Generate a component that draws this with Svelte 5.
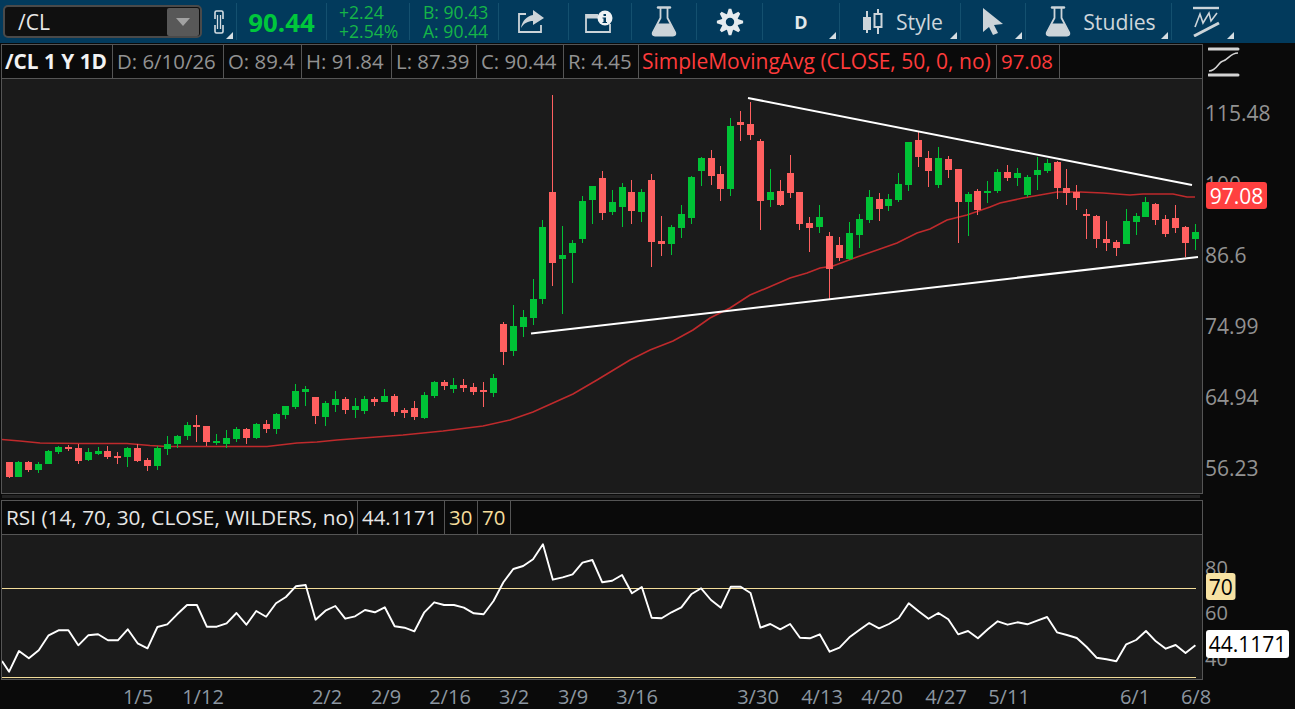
<script>
	// [high, body top, body bottom, low, up] in page pixels
	const candles = [
		[462, 462, 477, 478, 0], [461, 462, 477, 477, 1], [461, 462, 470, 472, 0], [462, 464, 470, 473, 1],
		[450, 451, 464, 464, 1], [446, 447, 452, 454, 1], [445, 447, 449, 451, 0], [444, 448, 461, 464, 0],
		[448, 452, 460, 461, 1], [447, 451, 454, 455, 1], [446, 451, 457, 459, 0], [452, 456, 458, 464, 0],
		[447, 448, 457, 467, 1], [444, 448, 461, 462, 0], [458, 460, 466, 471, 0], [446, 448, 466, 470, 1],
		[436, 444, 449, 455, 1], [435, 436, 444, 448, 1], [422, 425, 436, 440, 1], [415, 425, 427, 442, 0],
		[426, 426, 442, 446, 0], [434, 441, 443, 445, 1], [430, 438, 444, 448, 1], [427, 429, 439, 442, 1],
		[428, 429, 438, 444, 0], [423, 424, 438, 439, 1], [420, 424, 429, 433, 0], [413, 414, 429, 434, 1],
		[406, 406, 415, 419, 1], [384, 391, 407, 409, 1], [386, 389, 392, 406, 1], [397, 397, 416, 424, 0],
		[401, 403, 417, 426, 1], [391, 399, 405, 412, 1], [397, 399, 410, 414, 0], [398, 406, 410, 418, 1],
		[396, 399, 411, 414, 1], [397, 399, 402, 406, 0], [389, 396, 402, 402, 1], [394, 396, 412, 416, 0],
		[408, 410, 413, 418, 0], [401, 408, 417, 420, 0], [392, 395, 418, 419, 1], [381, 382, 396, 398, 1],
		[380, 382, 386, 390, 0], [378, 385, 389, 393, 1], [379, 385, 388, 392, 0], [383, 387, 392, 395, 0],
		[382, 390, 392, 407, 0], [374, 378, 393, 397, 1], [322, 324, 352, 365, 0], [305, 326, 351, 356, 1],
		[310, 317, 327, 337, 1], [279, 299, 318, 325, 1], [220, 227, 299, 304, 1], [95, 192, 263, 286, 0],
		[226, 255, 259, 314, 1], [240, 243, 253, 283, 1], [196, 201, 239, 243, 1], [186, 186, 200, 224, 1],
		[171, 178, 213, 220, 0], [190, 202, 212, 215, 1], [183, 187, 207, 227, 1], [180, 192, 211, 224, 0],
		[189, 192, 212, 222, 1], [174, 180, 242, 267, 0], [216, 241, 244, 256, 0], [225, 227, 244, 255, 1],
		[205, 214, 228, 238, 1], [176, 177, 218, 224, 1], [157, 158, 171, 186, 1], [150, 158, 176, 185, 0],
		[166, 174, 189, 201, 0], [118, 126, 189, 196, 1], [111, 122, 125, 141, 0], [102, 124, 135, 140, 0],
		[139, 141, 201, 230, 0], [169, 192, 200, 207, 1], [180, 191, 205, 206, 0], [155, 173, 193, 198, 0],
		[192, 192, 224, 230, 0], [217, 223, 228, 252, 0], [205, 217, 227, 233, 1], [232, 236, 269, 299, 0],
		[237, 245, 258, 261, 0], [222, 233, 259, 260, 1], [214, 219, 235, 248, 1], [190, 197, 220, 223, 1],
		[193, 199, 209, 221, 0], [194, 199, 206, 211, 1], [173, 184, 200, 202, 1], [142, 142, 185, 191, 1],
		[132, 140, 157, 167, 0], [151, 158, 171, 187, 0], [147, 158, 185, 188, 1], [156, 159, 170, 178, 0],
		[169, 169, 202, 243, 0], [192, 194, 202, 236, 1], [189, 191, 210, 215, 0], [181, 191, 193, 203, 1],
		[169, 172, 191, 193, 1], [165, 172, 178, 181, 0], [168, 173, 178, 186, 1], [175, 177, 195, 197, 1],
		[157, 170, 175, 190, 1], [159, 163, 171, 173, 1], [161, 162, 188, 199, 0], [169, 188, 193, 205, 0],
		[185, 192, 198, 210, 0], [209, 214, 216, 239, 0], [215, 216, 239, 248, 0], [221, 239, 243, 251, 0],
		[240, 242, 248, 256, 0], [209, 221, 244, 244, 1], [213, 216, 222, 235, 1], [197, 202, 217, 217, 1],
		[203, 204, 220, 225, 0], [215, 219, 234, 237, 0], [205, 218, 228, 233, 0], [226, 227, 243, 257, 0],
		[224, 232, 239, 250, 1]
	];

	const barX = (i) => Math.floor(9.1 + i * 9.886);

	const sma =
		'2,439.5 20,441 40,443 80,443.5 127,443.5 150,445.5 167,446.5 267,446.5 297,443 317,442 337,440 363,438 403,435 443,431 483,426 510,420 533,412 553,403 573,394 597,380 630,360 650,350 673,341 693,330 710,318 730,308 750,295 767,288 790,278 807,273 820,268 833,266 857,257 880,249 897,243 917,233 930,229 947,220 967,215 990,207 1000,203 1023,198 1040,195 1057,192 1080,192 1103,193 1130,195 1143,194 1173,194 1187,197 1195,197';

	// rsi values in zoomed rows, one per bar: page y = 495 + v / 3
	const rsiRaw = [
		530, 468, 490, 466, 421, 406, 406, 451, 421, 418, 436, 436, 403, 445, 460, 396, 388, 358, 330, 330, 395, 395,
		385, 354, 389, 348, 365, 325, 306, 274, 270, 374, 347, 333, 371, 364, 345, 352, 337, 394, 398, 409, 352, 322,
		330, 330, 338, 355, 358, 318, 262, 222, 213, 193, 148, 254, 247, 238, 203, 195, 262, 257, 240, 295, 276, 368,
		370, 352, 337, 298, 280, 315, 338, 275, 275, 294, 398, 387, 403, 387, 428, 430, 418, 470, 458, 427, 405, 384,
		400, 387, 369, 325, 349, 371, 354, 373, 418, 408, 430, 403, 379, 389, 382, 388, 377, 366, 412, 420, 429, 456,
		488, 493, 499, 448, 435, 408, 439, 461, 450, 474, 451
	];
	const rsi =
		'2,661 ' + rsiRaw.map((v, i) => `${9.1 + i * 9.886},${(495 + v / 3).toFixed(1)}`).join(' ');

	const legend = [
		{ t: '/CL 1 Y 1D', w: 111, k: 'sym' },
		{ t: 'D: 6/10/26', w: 111 },
		{ t: 'O: 89.4', w: 78 },
		{ t: 'H: 91.84', w: 90 },
		{ t: 'L: 87.39', w: 85 },
		{ t: 'C: 90.44', w: 87 },
		{ t: 'R: 4.45', w: 75 },
		{ t: 'SimpleMovingAvg (CLOSE, 50, 0, no)', w: 358, k: 'red sma' },
		{ t: '97.08', w: 63, k: 'red' }
	];

	const rsiLegend = [
		{ t: 'RSI (14, 70, 30, CLOSE, WILDERS, no)', w: 356, k: 'white wide' },
		{ t: '44.1171', w: 87, k: 'white' },
		{ t: '30', w: 33, k: 'yellow' },
		{ t: '70', w: 33, k: 'yellow' }
	];

	const dates = [
		['1/5', 138], ['1/12', 203], ['2/2', 327], ['2/9', 386], ['2/16', 450], ['3/2', 514], ['3/9', 573],
		['3/16', 637], ['3/30', 758], ['4/13', 822], ['4/20', 882], ['4/27', 946], ['5/11', 1009], ['6/1', 1135], ['6/8', 1196]
	];

	const prices = [
		['115.48', 121], ['100', 192], ['86.6', 263], ['74.99', 334], ['64.94', 405], ['56.23', 476]
	];

	// eight pointed gear outline, centred on 14,14
	function gearPath() {
		const pts = [];
		for (let n = 0; n < 8; n++) {
			const a = (n * Math.PI) / 4;
			for (const [d, r] of [[-0.36, 8.5], [-0.1, 13.2], [0.1, 13.2], [0.36, 8.5]]) {
				pts.push(`${(14 + r * Math.sin(a + d)).toFixed(2)} ${(14 - r * Math.cos(a + d)).toFixed(2)}`);
			}
		}
		return 'M' + pts.join('L') + 'ZM18.2 14A4.2 4.2 0 1 0 9.8 14A4.2 4.2 0 1 0 18.2 14Z';
	}
</script>

<div class="app">
	<header class="toolbar">
		<div class="symbol-box">
			<span class="symbol">/CL</span>
			<span class="drop"><i></i></span>
		</div>
		<div class="cell w-link">
			<svg width="12" height="24" viewBox="0 0 12 24" fill="none" stroke="#d5dde2" stroke-width="1.6">
				<path d="M2 9V2.5Q2 1 3.5 1H8.5Q10 1 10 2.5V9" />
				<path d="M2 15V21.5Q2 23 3.5 23H8.5Q10 23 10 21.5V15" />
				<path d="M4.5 5V19M7.5 5V19" stroke-width="1.3" />
			</svg>
			<span class="corner"></span>
		</div>
		<div class="cell w-price"><span class="last">90.44</span></div>
		<div class="cell w-change"><div class="quote"><span>+2.24</span><span>+2.54%</span></div></div>
		<div class="cell w-bid"><div class="quote"><span>B: 90.43</span><span>A: 90.44</span></div></div>
		<div class="cell w-share">
			<svg width="28" height="24" viewBox="0 0 28 24">
				<path d="M9 4H2V22H24V15" fill="none" stroke="#ccd4d9" stroke-width="1.8" />
				<path d="M16 0L27 8L16 15V11C11 11 7 13 4 18C5 11 10 6 16 5Z" fill="#ccd4d9" />
			</svg>
		</div>
		<div class="cell w-note">
			<svg width="29" height="24" viewBox="0 0 29 24">
				<path d="M14 5H2V22H26V14" fill="none" stroke="#ccd4d9" stroke-width="1.8" />
				<path d="M2 7H14" stroke="#ccd4d9" stroke-width="3" />
				<circle cx="21" cy="8" r="7.5" fill="#eef2f4" />
				<path d="M19.5 4H22V6H19.5ZM19.5 7.5H22V12H23V13H18.5V12H19.5V8.5H18.5V7.5Z" fill="#023a5c" />
			</svg>
		</div>
		<div class="cell w-flask">
			<svg width="26" height="31" viewBox="0 0 26 31">
				<path d="M7 1.5H19" stroke="#ccd4d9" stroke-width="2.4" stroke-linecap="round" />
				<path d="M9.5 2V12L1.8 26.5Q1 29.5 4 29.5H22Q25 29.5 24.2 26.5L16.5 12V2" fill="none" stroke="#ccd4d9" stroke-width="1.8" />
				<path d="M7 17.5H19L24 27Q24.5 30 22 30H4Q1.5 30 2 27Z" fill="#ccd4d9" />
			</svg>
		</div>
		<div class="cell w-gear">
			<svg width="28" height="28" viewBox="0 0 28 28">
				<path d={gearPath()} fill="#e6ebee" fill-rule="evenodd" />
			</svg>
		</div>
		<div class="cell w-d"><b class="d">D</b><span class="corner"></span></div>
		<div class="cell w-style">
			<svg width="22" height="26" viewBox="0 0 22 26" fill="none" stroke="#ccd4d9">
				<path d="M5 2V24" stroke-width="2" />
				<rect x="1" y="8" width="8" height="13" fill="#ccd4d9" stroke="none" />
				<path d="M16 0V25" stroke-width="2" />
				<rect x="12.5" y="5" width="7" height="13" fill="#023a5c" stroke-width="2" />
			</svg>
			<span class="label">Style</span>
			<span class="corner"></span>
		</div>
		<div class="cell w-cursor">
			<svg width="20" height="27" viewBox="0 0 20 27">
				<path d="M0 0V24L6 19L10 27L15 25L11 17L20 16Z" fill="#ccd4d9" />
			</svg>
			<span class="corner"></span>
		</div>
		<div class="cell w-studies">
			<svg width="26" height="31" viewBox="0 0 26 31">
				<path d="M7 1.5H19" stroke="#ccd4d9" stroke-width="2.4" stroke-linecap="round" />
				<path d="M9.5 2V12L1.8 26.5Q1 29.5 4 29.5H22Q25 29.5 24.2 26.5L16.5 12V2" fill="none" stroke="#ccd4d9" stroke-width="1.8" />
				<path d="M7 17.5H19L24 27Q24.5 30 22 30H4Q1.5 30 2 27Z" fill="#ccd4d9" />
			</svg>
			<span class="label">Studies</span>
			<span class="corner"></span>
		</div>
		<div class="cell w-draw">
			<svg width="27" height="31" viewBox="0 0 27 31" fill="none" stroke="#ccd4d9">
				<path d="M0 2H26" stroke-width="2.4" />
				<path d="M2 21L7 8L10 17L16 7L18 15L24 7" stroke-width="1.6" />
				<path d="M1 30L26 17" stroke-width="3" />
			</svg>
			<span class="corner"></span>
		</div>
	</header>

	<section class="panel-row price-row">
		<div class="panel">
			<div class="legend">
				{#each legend as c}
					<span class="lg {c.k ?? ''}" style="width:{c.w}px">{c.t}</span>
				{/each}
			</div>
			<svg class="plot" width="1200" height="414" viewBox="2 79 1200 414">
				<polyline points={sma} fill="none" stroke="#bf2a2c" stroke-width="1.6" />
				{#each candles as [hi, top, bot, lo, up], i}
					<g class={up ? 'up' : 'down'} shape-rendering="crispEdges">
						<rect x={barX(i)} y={hi} width="1" height={lo - hi} />
						<rect x={barX(i) - 3} y={top} width="7" height={bot - top} />
					</g>
				{/each}
				<line x1="748" y1="98" x2="1192" y2="185" stroke="#fff" stroke-width="2" />
				<line x1="531" y1="333.5" x2="1198" y2="257" stroke="#fff" stroke-width="2" />
			</svg>
		</div>
		<div class="axis">
			<div class="axis-head">
				<svg width="32" height="30" viewBox="0 0 32 30" fill="none" stroke="#d4d4d4">
					<path d="M1 2H30M1 28H30" stroke-width="3" stroke-linecap="round" />
					<path d="M1 24C9 24 10 15 15 14S22 6 30 6" stroke-width="1.5" />
				</svg>
			</div>
			<svg width="93" height="414" viewBox="1203 79 93 414">
				{#each prices as [p, y]}
					<text x="1205" {y} class="scale big">{p}</text>
				{/each}
				<rect x="1206" y="182" width="61" height="27" rx="3" fill="#ff4040" />
				<text x="1236.5" y="204" class="tag" fill="#fff">97.08</text>
			</svg>
		</div>
	</section>

	<div class="handle"></div>

	<section class="panel-row rsi-row">
		<div class="panel">
			<div class="legend">
				{#each rsiLegend as c}
					<span class="lg {c.k}" style="width:{c.w}px">{c.t}</span>
				{/each}
			</div>
			<svg class="plot" width="1200" height="144" viewBox="2 535 1200 144">
				<line x1="2" y1="588.5" x2="1196" y2="588.5" class="level" />
				<line x1="2" y1="677.5" x2="1196" y2="677.5" class="level" />
				<polyline points={rsi} fill="none" stroke="#fff" stroke-width="1.9" stroke-linejoin="round" />
			</svg>
		</div>
		<div class="axis rsi-axis">
			<svg width="93" height="180" viewBox="1203 500 93 180">
				<text x="1205" y="575" class="scale">80</text>
				<text x="1205" y="620" class="scale">60</text>
				<text x="1205" y="666" class="scale">40</text>
				<rect x="1206" y="573" width="29.5" height="27" rx="3" fill="#f7e2a3" />
				<text x="1220.7" y="595" class="tag" fill="#000">70</text>
				<rect x="1206" y="630" width="83" height="28" rx="3" fill="#fff" />
				<text x="1247.5" y="652" class="tag" fill="#000">44.1171</text>
			</svg>
		</div>
	</section>

	<svg class="dates" width="1295" height="29" viewBox="0 680 1295 29">
		{#each dates as [d, x]}
			<text {x} y="703.5" text-anchor="middle">{d}</text>
		{/each}
	</svg>
</div>

<style>
	:global(body) {
		margin: 0;
		background: #0a0a0a;
	}

	.app {
		width: 1295px;
		height: 709px;
		overflow: hidden;
		background: #0a0a0a;
		font-family: 'Open Sans', sans-serif;
		color: #929292;
	}

	.toolbar {
		display: flex;
		height: 44px;
		box-sizing: border-box;
		padding-bottom: 1px;
		background: #023a5c;
		border-bottom: 1px solid #0a0a0a;
		align-items: stretch;
	}

	.symbol-box {
		position: relative;
		width: 199px;
		margin: 5px 0 4px 3px;
		box-sizing: border-box;
		flex: none;
		display: flex;
		align-items: center;
		justify-content: space-between;
		background: #101010;
		border: 2px solid #4a4a4a;
		border-radius: 5px;
	}

	.symbol {
		margin-left: 13px;
		font-size: 21px;
		color: #e8e8e8;
	}

	.drop {
		width: 32px;
		height: 28px;
		margin-right: 1px;
		display: flex;
		align-items: center;
		justify-content: center;
		background: #585858;
		border-radius: 2px;
	}

	.drop i {
		width: 0;
		height: 0;
		border-left: 7px solid transparent;
		border-right: 7px solid transparent;
		border-top: 8px solid #a2a2a2;
	}

	.cell {
		position: relative;
		flex: none;
		box-sizing: border-box;
		margin: 3px 0 2px;
		display: flex;
		align-items: center;
		justify-content: center;
		gap: 12px;
		border-right: 1px solid #14506f;
	}

	.w-link { width: 35px; padding-right: 1px; }
	.w-price { width: 90px; }
	.w-change { width: 83px; justify-content: flex-start; padding-left: 12px; }
	.w-bid { width: 89px; justify-content: flex-start; padding-left: 13px; }
	.w-share { width: 70px; padding-right: 6px; }
	.w-note { width: 63px; padding-right: 3px; }
	.w-flask { width: 65px; }
	.w-gear { width: 66px; }
	.w-d { width: 77px; }
	.w-style { width: 121px; padding-left: 5px; }
	.w-cursor { width: 65px; }
	.w-studies { width: 146px; padding-left: 4px; }
	.w-draw { width: 65px; border-right: none; padding-left: 3px; }

	.corner {
		position: absolute;
		right: 3px;
		bottom: 1px;
		width: 0;
		height: 0;
		border-left: 7px solid transparent;
		border-bottom: 7px solid #d5dde2;
	}

	.last {
		font-size: 25.8px;
		font-weight: 700;
		color: #00c73c;
	}

	.quote {
		display: flex;
		flex-direction: column;
		font-size: 17.6px;
		line-height: 19px;
		color: #16b548;
		white-space: nowrap;
	}

	.d {
		font-size: 18px;
		color: #e2e8eb;
	}

	.label {
		font-size: 21.2px;
		color: #ced6db;
	}

	.panel-row {
		display: grid;
		grid-template-columns: 1203px 92px;
	}

	.panel {
		margin-left: 1px;
		width: 1202px;
		box-sizing: border-box;
		border: 1px solid #555;
		background: #1b1b1b;
		display: flex;
		flex-direction: column;
	}

	.price-row .panel { height: 450px; }
	.rsi-row .panel { height: 180px; }

	.legend {
		display: flex;
		height: 34px;
		flex: none;
		box-sizing: border-box;
		border-bottom: 1px solid #555;
		background: #0a0a0a;
	}

	.lg {
		box-sizing: border-box;
		flex: none;
		padding-left: 4px;
		border-right: 1px solid #555;
		font-size: 20.4px;
		line-height: 33px;
		white-space: nowrap;
	}

	.sym { font-weight: 700; font-size: 20.8px; color: #f2f2f2; padding-left: 3px; }
	.red { color: #ff3b3b; }
	.sma { font-size: 21px; padding-left: 3px; }
	.white { color: #e6e6e6; }
	.wide { font-size: 20.8px; }
	.yellow { color: #f5dd9b; }

	.plot { display: block; }

	.up { fill: #00c236; }
	.down { fill: #ff6060; }

	.level {
		stroke: #f3dd9a;
		stroke-width: 1;
	}

	.axis {
		display: flex;
		flex-direction: column;
	}

	.axis-head {
		height: 35px;
		padding-left: 5px;
		display: flex;
		align-items: center;
	}

	.scale {
		font-size: 20px;
		fill: #929292;
	}

	.scale.big { font-size: 21px; }

	.tag {
		font-size: 21px;
		text-anchor: middle;
	}

	.handle {
		height: 3px;
		margin: 1px 95px 2px 2px;
		background: #232323;
	}

	.dates {
		display: block;
	}

	.dates text {
		font-size: 20px;
		fill: #8c96a0;
	}
</style>
